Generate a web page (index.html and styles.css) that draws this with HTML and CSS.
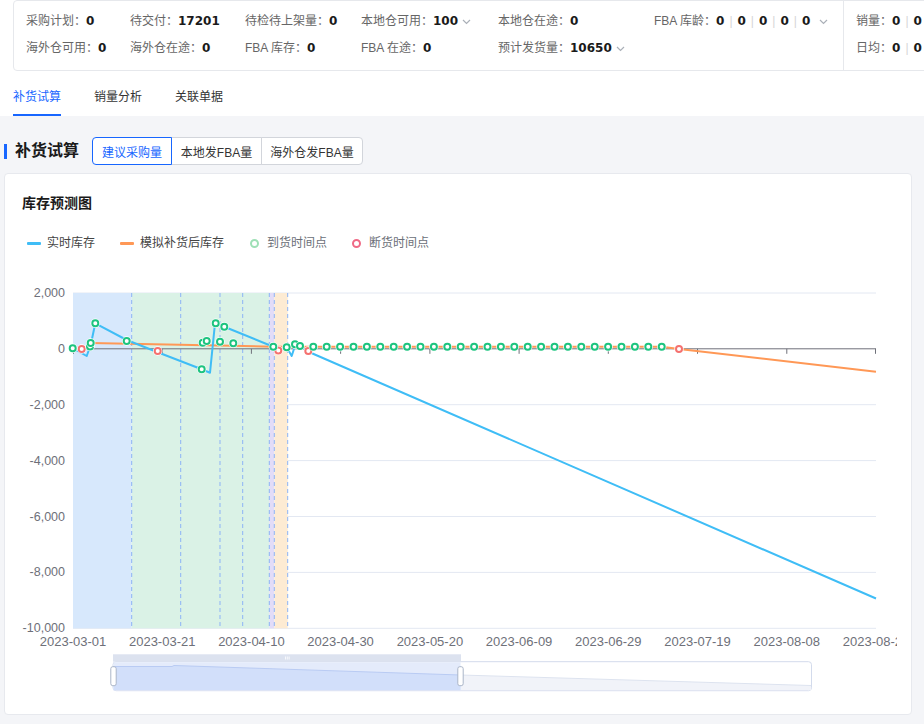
FILE: index.html
```html
<!DOCTYPE html>
<html lang="zh-CN">
<head>
<meta charset="utf-8">
<title>补货试算</title>
<link rel="stylesheet" href="styles.css">
</head>
<body>
<header class="top">
  <div class="stats-wrap">
    <div class="stats-card">
      <div class="stats-main">
        <div class="stat"><span class="lbl">采购计划：</span><b class="val">0</b></div>
        <div class="stat"><span class="lbl">待交付：</span><b class="val">17201</b></div>
        <div class="stat"><span class="lbl">待检待上架量：</span><b class="val">0</b></div>
        <div class="stat"><span class="lbl">本地仓可用：</span><b class="val">100</b><svg class="chev" width="9" height="6" viewBox="0 0 9 6"><path d="M1 1 L4.5 4.5 L8 1"/></svg></div>
        <div class="stat"><span class="lbl">本地仓在途：</span><b class="val">0</b></div>
        <div class="stat"><span class="lbl">FBA 库龄：</span><b class="val">0</b><span class="sep">|</span><b class="val">0</b><span class="sep">|</span><b class="val">0</b><span class="sep">|</span><b class="val">0</b><span class="sep">|</span><b class="val">0</b><svg class="chev chev-wide" width="9" height="6" viewBox="0 0 9 6"><path d="M1 1 L4.5 4.5 L8 1"/></svg></div>
        <div class="stat"><span class="lbl">海外仓可用：</span><b class="val">0</b></div>
        <div class="stat"><span class="lbl">海外仓在途：</span><b class="val">0</b></div>
        <div class="stat"><span class="lbl">FBA 库存：</span><b class="val">0</b></div>
        <div class="stat"><span class="lbl">FBA 在途：</span><b class="val">0</b></div>
        <div class="stat"><span class="lbl">预计发货量：</span><b class="val">10650</b><svg class="chev" width="9" height="6" viewBox="0 0 9 6"><path d="M1 1 L4.5 4.5 L8 1"/></svg></div>
      </div>
      <div class="stats-side">
        <div class="stat"><span class="lbl">销量：</span><b class="val">0</b><span class="sep">|</span><b class="val">0</b></div>
        <div class="stat"><span class="lbl">日均：</span><b class="val">0</b><span class="sep">|</span><b class="val">0</b></div>
      </div>
    </div>
  </div>
  <nav class="tabs">
    <span class="tab active">补货试算</span>
    <span class="tab">销量分析</span>
    <span class="tab">关联单据</span>
  </nav>
</header>

<main class="content">
  <div class="section-head">
    <span class="bar"></span>
    <h2 class="section-title">补货试算</h2>
    <div class="btn-group">
      <button class="btn active w1">建议采购量</button>
      <button class="btn w2">本地发FBA量</button>
      <button class="btn w3">海外仓发FBA量</button>
    </div>
  </div>

  <section class="chart-card">
    <h3 class="chart-title">库存预测图</h3>
    <div class="legend">
      <span class="lg lg1"><i class="lg-line blue"></i>实时库存</span>
      <span class="lg lg2"><i class="lg-line orange"></i>模拟补货后库存</span>
      <span class="lg lg3"><i class="lg-ring green"></i>到货时间点</span>
      <span class="lg lg4"><i class="lg-ring red"></i>断货时间点</span>
    </div>
    <svg class="chart" width="892" height="420" viewBox="5 280 892 420">
      <defs>
        <g id="gc"><circle r="4.7" fill="#fff"/><circle r="3" fill="#fff" stroke="#1dc47f" stroke-width="2"/></g>
        <g id="rc"><circle r="4.7" fill="#fff"/><circle r="3" fill="#fff" stroke="#f5716f" stroke-width="2"/></g>
      </defs>
      <!-- grid -->
      <g stroke="#e3e8f2" stroke-width="1">
        <line x1="73" y1="293" x2="876" y2="293"/>
        <line x1="73" y1="404.7" x2="876" y2="404.7"/>
        <line x1="73" y1="460.6" x2="876" y2="460.6"/>
        <line x1="73" y1="516.5" x2="876" y2="516.5"/>
        <line x1="73" y1="572.4" x2="876" y2="572.4"/>
        <line x1="73" y1="628.3" x2="876" y2="628.3"/>
      </g>
      <!-- bands -->
      <rect x="73" y="293" width="58.7" height="335.3" fill="#d7e8fc"/>
      <rect x="131.7" y="293" width="137.6" height="335.3" fill="#daf2e6"/>
      <rect x="269.3" y="293" width="5" height="335.3" fill="#e2dcf8"/>
      <rect x="274.3" y="293" width="13.4" height="335.3" fill="#fdebd3"/>
      <g stroke="#8db3f6" stroke-width="1" stroke-dasharray="4 3">
        <line x1="131.7" y1="293" x2="131.7" y2="628.3"/>
        <line x1="180.7" y1="293" x2="180.7" y2="628.3"/>
        <line x1="220" y1="293" x2="220" y2="628.3"/>
        <line x1="242.7" y1="293" x2="242.7" y2="628.3"/>
        <line x1="269.3" y1="293" x2="269.3" y2="628.3"/>
        <line x1="274.3" y1="293" x2="274.3" y2="628.3"/>
        <line x1="287.7" y1="293" x2="287.7" y2="628.3"/>
      </g>
      <!-- zero axis -->
      <g stroke="#6e7079" stroke-width="1">
        <line x1="73" y1="348.8" x2="876" y2="348.8"/>
        <line x1="73.5" y1="348.8" x2="73.5" y2="353.8"/>
        <line x1="162.2" y1="348.8" x2="162.2" y2="353.8"/>
        <line x1="251.4" y1="348.8" x2="251.4" y2="353.8"/>
        <line x1="340.6" y1="348.8" x2="340.6" y2="353.8"/>
        <line x1="429.9" y1="348.8" x2="429.9" y2="353.8"/>
        <line x1="519.1" y1="348.8" x2="519.1" y2="353.8"/>
        <line x1="608.3" y1="348.8" x2="608.3" y2="353.8"/>
        <line x1="697.5" y1="348.8" x2="697.5" y2="353.8"/>
        <line x1="786.8" y1="348.8" x2="786.8" y2="353.8"/>
        <line x1="875.5" y1="348.8" x2="875.5" y2="353.8"/>
      </g>
      <!-- y labels -->
      <g class="ylab" text-anchor="end">
        <text x="65" y="296.5">2,000</text>
        <text x="65" y="352.8">0</text>
        <text x="65" y="408.7">-2,000</text>
        <text x="65" y="464.6">-4,000</text>
        <text x="65" y="520.5">-6,000</text>
        <text x="65" y="576.4">-8,000</text>
        <text x="65" y="632.3">-10,000</text>
      </g>
      <!-- x labels -->
      <g class="xlab" text-anchor="middle">
        <text x="73" y="645.5">2023-03-01</text>
        <text x="162.2" y="645.5">2023-03-21</text>
        <text x="251.4" y="645.5">2023-04-10</text>
        <text x="340.6" y="645.5">2023-04-30</text>
        <text x="429.9" y="645.5">2023-05-20</text>
        <text x="519.1" y="645.5">2023-06-09</text>
        <text x="608.3" y="645.5">2023-06-29</text>
        <text x="697.5" y="645.5">2023-07-19</text>
        <text x="786.8" y="645.5">2023-08-08</text>
        <text x="876" y="645.5">2023-08-28</text>
      </g>
      <!-- series -->
      <polyline fill="none" stroke="#ff9856" stroke-width="2" stroke-linejoin="round" points="90.7,343 273.3,346.7 661.7,346.7 679,349 876,371.7"/>
      <polyline fill="none" stroke="#3fbdf6" stroke-width="2" stroke-linejoin="round" points="73,348.3 86.7,356 90.7,345 95.3,323.3 126.7,340 157.7,352.3 201.7,369.3 210,372.7 215,323.3 224.3,326.7 273.3,346.7 278.3,350.5 286.7,347.3 291.7,356 295.5,344.3 300.7,346.7 309,352 876,598.5"/>
      <use href="#rc" x="81.7" y="349"/>
      <use href="#rc" x="157.7" y="351"/>
      <use href="#rc" x="278.3" y="350.5"/>
      <use href="#rc" x="308.3" y="351"/>
      <use href="#rc" x="679" y="349"/>
      <use href="#gc" x="72.7" y="348.3"/>
      <use href="#gc" x="90" y="346.5"/>
      <use href="#gc" x="90.7" y="343"/>
      <use href="#gc" x="95.3" y="323.3"/>
      <use href="#gc" x="126.7" y="341"/>
      <use href="#gc" x="201.7" y="369.3"/>
      <use href="#gc" x="202.7" y="342.7"/>
      <use href="#gc" x="206.7" y="341"/>
      <use href="#gc" x="215.7" y="323.3"/>
      <use href="#gc" x="220" y="341.7"/>
      <use href="#gc" x="224.3" y="326.7"/>
      <use href="#gc" x="233.3" y="343.3"/>
      <use href="#gc" x="273.3" y="346.7"/>
      <use href="#gc" x="286.7" y="347.3"/>
      <use href="#gc" x="295" y="344.3"/>
      <use href="#gc" x="300" y="346"/>
      <use href="#gc" x="313.3" y="346.7"/>
      <use href="#gc" x="326.7" y="346.7"/>
      <use href="#gc" x="340.1" y="346.7"/>
      <use href="#gc" x="353.5" y="346.7"/>
      <use href="#gc" x="366.9" y="346.7"/>
      <use href="#gc" x="380.3" y="346.7"/>
      <use href="#gc" x="393.7" y="346.7"/>
      <use href="#gc" x="407.1" y="346.7"/>
      <use href="#gc" x="420.5" y="346.7"/>
      <use href="#gc" x="433.9" y="346.7"/>
      <use href="#gc" x="447.3" y="346.7"/>
      <use href="#gc" x="460.7" y="346.7"/>
      <use href="#gc" x="474.1" y="346.7"/>
      <use href="#gc" x="487.5" y="346.7"/>
      <use href="#gc" x="500.9" y="346.7"/>
      <use href="#gc" x="514.3" y="346.7"/>
      <use href="#gc" x="527.7" y="346.7"/>
      <use href="#gc" x="541.1" y="346.7"/>
      <use href="#gc" x="554.5" y="346.7"/>
      <use href="#gc" x="567.9" y="346.7"/>
      <use href="#gc" x="581.3" y="346.7"/>
      <use href="#gc" x="594.7" y="346.7"/>
      <use href="#gc" x="608.1" y="346.7"/>
      <use href="#gc" x="621.5" y="346.7"/>
      <use href="#gc" x="634.9" y="346.7"/>
      <use href="#gc" x="648.3" y="346.7"/>
      <use href="#gc" x="661.7" y="346.7"/>
      <!-- data zoom -->
      <rect x="113" y="661.7" width="698.5" height="29" rx="3" fill="#fff" stroke="#d3dbec"/>
      <polygon points="113.5,666.5 172,666.5 174,665.5 461,675 811,685.5 811,690.2 113.5,690.2" fill="#f1f3f9" stroke="none"/>
      <polyline points="461,675 811,685.5" fill="none" stroke="#dde3ef" stroke-width="1"/>
      <rect x="113.5" y="662.2" width="347" height="28" fill="#e4ebfb"/>
      <polygon points="113.5,666.5 172,666.5 174,665.5 460.5,675 460.5,690.2 113.5,690.2" fill="#d2dffa"/>
      <polyline points="113.5,666.5 172,666.5 174,665.5 460.5,675" fill="none" stroke="#b9cbf3" stroke-width="1"/>
      <rect x="113" y="654.3" width="348" height="7.4" fill="#dce2ef"/>
      <g stroke="#fff" stroke-width="0.8">
        <line x1="285.5" y1="656.5" x2="285.5" y2="659.5"/>
        <line x1="287.3" y1="656.5" x2="287.3" y2="659.5"/>
        <line x1="289.1" y1="656.5" x2="289.1" y2="659.5"/>
      </g>
      <rect x="110.8" y="666.7" width="5.4" height="19" rx="2" fill="#fff" stroke="#aab5c8"/>
      <rect x="457.8" y="666.7" width="5.4" height="19" rx="2" fill="#fff" stroke="#aab5c8"/>
    </svg>
  </section>
</main>
</body>
</html>
```

FILE: styles.css
```css
* { box-sizing: border-box; }
html, body {
  margin: 0;
  height: 724px;
  overflow: hidden;
}
body {
  background: #f4f5f8;
  font-family: "Liberation Sans", "Noto Sans CJK SC", sans-serif;
  font-size: 12px;
  color: #333;
}

/* ---------- top white area ---------- */
.top {
  background: #fff;
}
.stats-wrap {
  padding-left: 13px;
  overflow: hidden;
}
.stats-card {
  display: flex;
  width: 960px;
  border: 1px solid #e6e8ec;
  border-radius: 4px;
  background: #fff;
}
.stats-main {
  width: 830px;
  flex-shrink: 0;
  border-right: 1px solid #e6e8ec;
  padding: 10px 0 12px 12px;
  display: grid;
  grid-template-columns: 104px 115px 116px 137px 156px auto;
  row-gap: 7px;
}
.stats-side {
  padding: 10px 0 12px 12px;
  display: flex;
  flex-direction: column;
  row-gap: 7px;
}
.stat {
  display: flex;
  align-items: center;
  height: 20px;
  line-height: 20px;
  white-space: nowrap;
}
.lbl {
  color: #666;
}
.val {
  font-family: "DejaVu Sans", sans-serif;
  font-weight: bold;
  font-size: 12px;
  color: #1a1a1a;
}
.sep {
  color: #d6d6d6;
  margin: 0 5px;
}
.chev {
  margin-left: 4px;
  margin-top: 1px;
  fill: none;
  stroke: #aab0b8;
  stroke-width: 1.2;
}
.chev-wide {
  margin-left: 9px;
}

/* ---------- tabs ---------- */
.tabs {
  display: flex;
  gap: 33px;
  height: 45px;
  padding-left: 13px;
  align-items: flex-end;
}
.tab {
  line-height: 20px;
  padding-bottom: 7px;
  border-bottom: 2px solid transparent;
  color: #333;
}
.tab.active {
  color: #1766ff;
  border-bottom-color: #1766ff;
}

/* ---------- content ---------- */
.content {
  padding: 0 12px 0 4px;
}
.section-head {
  margin-top: 21px;
  height: 28px;
  display: flex;
  align-items: center;
}
.bar {
  width: 3px;
  height: 15px;
  background: #1766ff;
  margin-right: 8px;
}
.section-title {
  margin: 0;
  font-size: 16px;
  font-weight: bold;
  color: #1a1a1a;
  line-height: 28px;
}
.btn-group {
  display: flex;
  margin-left: 13px;
}
.btn {
  height: 28px;
  border: 1px solid #d2d5db;
  background: #fff;
  color: #333;
  font-family: inherit;
  font-size: 12px;
  padding: 0;
  margin: 0;
  text-align: center;
  position: relative;
}
.btn + .btn { margin-left: -1px; }
.btn.w1 { width: 80px; border-radius: 4px 0 0 4px; }
.btn.w2 { width: 91px; }
.btn.w3 { width: 102px; border-radius: 0 4px 4px 0; }
.btn.active {
  border-color: #1766ff;
  color: #1766ff;
  z-index: 1;
}

/* ---------- chart card ---------- */
.chart-card {
  margin-top: 8px;
  width: 908px;
  background: #fff;
  border: 1px solid #e7e9ee;
  border-radius: 4px;
  padding: 19px 0 14px 0;
}
.chart-title {
  margin: 0;
  padding-left: 17px;
  font-size: 14px;
  line-height: 20px;
  font-weight: bold;
  color: #1a1a1a;
}
.legend {
  margin-top: 22px;
  padding-left: 22px;
  display: flex;
  height: 16px;
  line-height: 16px;
}
.lg {
  display: inline-flex;
  align-items: center;
  color: #444;
  white-space: nowrap;
}
.lg1 { margin-right: 25px; }
.lg2 { margin-right: 26px; }
.lg3 { margin-right: 25px; color: #6b6f78; }
.lg4 { color: #6b6f78; }
.lg-line {
  width: 14px;
  height: 3px;
  border-radius: 1px;
  margin-right: 6px;
}
.lg-line.blue { background: #3fbdf6; }
.lg-line.orange { background: #ff9856; }
.lg-ring {
  width: 9px;
  height: 9px;
  border-radius: 50%;
  border: 2px solid;
  margin-right: 8px;
}
.lg-ring.green { border-color: #9ee0b6; }
.lg-ring.red { border-color: #ef6a86; }

.chart {
  display: block;
  margin-top: 29px;
}
.ylab text {
  font-family: "Liberation Sans", sans-serif;
  font-size: 12.5px;
  fill: #6e7079;
}
.xlab text {
  font-family: "Liberation Sans", sans-serif;
  font-size: 13px;
  fill: #6e7079;
}
```
